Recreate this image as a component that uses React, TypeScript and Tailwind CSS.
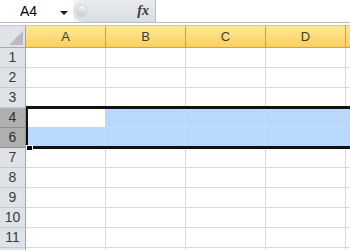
const cols = ["A", "B", "C", "D", "E"];
const rows = [1, 2, 3, 4, 6, 7, 8, 9, 10, 11, 12];

function FormulaBar() {
  return (
    <div className="flex h-[23px] border-b border-[#b9bdc3] bg-[#f3f4f6]">
      <div className="relative flex w-[73px] shrink-0 items-center bg-white">
        <span className="pl-[20px] text-[14px] leading-none text-black">A4</span>
        <span className="absolute left-[60px] top-[11px] h-0 w-0 border-x-[4px] border-t-[4px] border-x-transparent border-t-[#1f1f1f]" />
      </div>
      <div className="flex w-[83px] shrink-0 items-center rounded-l-full border-r border-[#b9bdc3] bg-gradient-to-b from-[#e9ebee] to-[#d9dce1]">
        <div className="ml-[4px] h-[10px] w-[10px] rounded-full bg-gradient-to-b from-[#f4f5f7] to-[#c4c8ce] shadow-[0_0_0_1px_#cfd2d7]" />
        <span className="ml-auto mr-[6px] font-['Liberation_Serif',serif] text-[14px] font-bold italic leading-none text-[#3a3a3a]">
          fx
        </span>
      </div>
      <div className="flex-1 bg-white" />
    </div>
  );
}

function ColumnHeader() {
  return (
    <div className="flex h-[22px] border-b border-[#d8a23c]">
      <div className="relative w-[26px] shrink-0 border-r border-[#9ea3aa] bg-[#dfe3e8]">
        <div className="absolute bottom-[2px] right-[2px] h-0 w-0 border-b-[14px] border-l-[14px] border-b-[#b7bbc1] border-l-transparent" />
      </div>
      {cols.map((c) => (
        <div
          key={c}
          className="flex w-[80px] shrink-0 items-center justify-center border-r border-[#d1a04a] bg-gradient-to-b from-[#fde795] to-[#f9d25d] text-[13px] text-[#3b3b3b]"
        >
          {c === "E" ? "" : c}
        </div>
      ))}
    </div>
  );
}

function Row({ n }: { n: number }) {
  const sel = n === 4 || n === 6;
  return (
    <div className="flex h-[20px]">
      <div
        className={
          sel
            ? "flex w-[26px] shrink-0 items-center justify-center border-b border-r border-[#8f8f8f] bg-[#afafaf] text-[14px] text-[#303030]"
            : "flex w-[26px] shrink-0 items-center justify-center border-b border-r border-b-[#c6cacf] border-r-[#9ea3aa] bg-[#dfe3e8] text-[14px] text-[#3b3b3b]"
        }
      >
        {n === 12 ? "" : n}
      </div>
      {cols.map((c, i) => (
        <div
          key={c}
          className={
            sel
              ? n === 4 && i === 0
                ? "w-[80px] shrink-0 border-b border-r border-[#d4d4d4] bg-white"
                : "w-[80px] shrink-0 border-b border-r border-[#cbdcf0] bg-[#b8d8fd]"
              : "w-[80px] shrink-0 border-b border-r border-[#d9d9d9] bg-white"
          }
        />
      ))}
    </div>
  );
}

export default function App() {
  return (
    <div className="h-[250px] w-[350px] overflow-hidden bg-white font-['Liberation_Sans',Arial,sans-serif]">
      <FormulaBar />
      <div className="h-[2px] bg-white" />
      <div className="border-t border-[#c3c7cd]">
        <ColumnHeader />
        <div className="relative">
          {rows.map((n) => (
            <Row key={n} n={n} />
          ))}
          {/* selection outline */}
          <div className="pointer-events-none absolute left-[26px] top-[58px] h-[43px] w-[330px] border-y-[3px] border-l-[2px] border-[#111]" />
          <div className="absolute left-[26px] top-[97px] h-[6px] w-[7px] border border-white bg-black" />
        </div>
      </div>
    </div>
  );
}
